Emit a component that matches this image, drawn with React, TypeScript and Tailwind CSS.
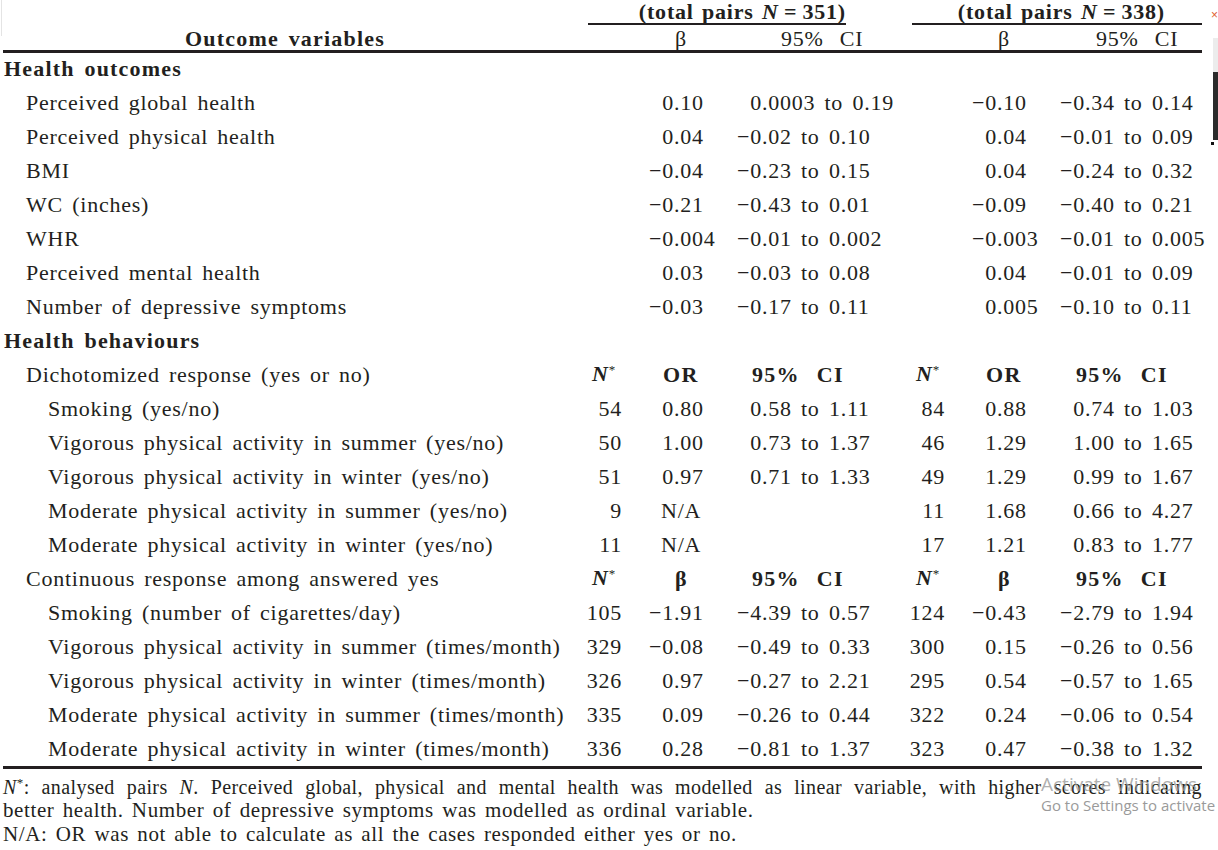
import React from 'react'

type Group = [string, string, string, string] // N, estimate, CI lower, CI upper

interface Row {
  kind: 'section' | 'data' | 'subhead'
  label: string
  level?: number
  head?: 'OR' | 'β'
  g1?: Group
  g2?: Group
}

const rows: Row[] = [
  { kind: 'section', label: 'Health outcomes' },
  { kind: 'data', level: 1, label: 'Perceived global health', g1: ['', '0.10', '0.0003', '0.19'], g2: ['', '−0.10', '−0.34', '0.14'] },
  { kind: 'data', level: 1, label: 'Perceived physical health', g1: ['', '0.04', '−0.02', '0.10'], g2: ['', '0.04', '−0.01', '0.09'] },
  { kind: 'data', level: 1, label: 'BMI', g1: ['', '−0.04', '−0.23', '0.15'], g2: ['', '0.04', '−0.24', '0.32'] },
  { kind: 'data', level: 1, label: 'WC (inches)', g1: ['', '−0.21', '−0.43', '0.01'], g2: ['', '−0.09', '−0.40', '0.21'] },
  { kind: 'data', level: 1, label: 'WHR', g1: ['', '−0.004', '−0.01', '0.002'], g2: ['', '−0.003', '−0.01', '0.005'] },
  { kind: 'data', level: 1, label: 'Perceived mental health', g1: ['', '0.03', '−0.03', '0.08'], g2: ['', '0.04', '−0.01', '0.09'] },
  { kind: 'data', level: 1, label: 'Number of depressive symptoms', g1: ['', '−0.03', '−0.17', '0.11'], g2: ['', '0.005', '−0.10', '0.11'] },
  { kind: 'section', label: 'Health behaviours' },
  { kind: 'subhead', level: 1, label: 'Dichotomized response (yes or no)', head: 'OR' },
  { kind: 'data', level: 2, label: 'Smoking (yes/no)', g1: ['54', '0.80', '0.58', '1.11'], g2: ['84', '0.88', '0.74', '1.03'] },
  { kind: 'data', level: 2, label: 'Vigorous physical activity in summer (yes/no)', g1: ['50', '1.00', '0.73', '1.37'], g2: ['46', '1.29', '1.00', '1.65'] },
  { kind: 'data', level: 2, label: 'Vigorous physical activity in winter (yes/no)', g1: ['51', '0.97', '0.71', '1.33'], g2: ['49', '1.29', '0.99', '1.67'] },
  { kind: 'data', level: 2, label: 'Moderate physical activity in summer (yes/no)', g1: ['9', 'N/A', '', ''], g2: ['11', '1.68', '0.66', '4.27'] },
  { kind: 'data', level: 2, label: 'Moderate physical activity in winter (yes/no)', g1: ['11', 'N/A', '', ''], g2: ['17', '1.21', '0.83', '1.77'] },
  { kind: 'subhead', level: 1, label: 'Continuous response among answered yes', head: 'β' },
  { kind: 'data', level: 2, label: 'Smoking (number of cigarettes/day)', g1: ['105', '−1.91', '−4.39', '0.57'], g2: ['124', '−0.43', '−2.79', '1.94'] },
  { kind: 'data', level: 2, label: 'Vigorous physical activity in summer (times/month)', g1: ['329', '−0.08', '−0.49', '0.33'], g2: ['300', '0.15', '−0.26', '0.56'] },
  { kind: 'data', level: 2, label: 'Vigorous physical activity in winter (times/month)', g1: ['326', '0.97', '−0.27', '2.21'], g2: ['295', '0.54', '−0.57', '1.65'] },
  { kind: 'data', level: 2, label: 'Moderate physical activity in summer (times/month)', g1: ['335', '0.09', '−0.26', '0.44'], g2: ['322', '0.24', '−0.06', '0.54'] },
  { kind: 'data', level: 2, label: 'Moderate physical activity in winter (times/month)', g1: ['336', '0.28', '−0.81', '1.37'], g2: ['323', '0.47', '−0.38', '1.32'] },
]

const cols = 'grid grid-cols-[582px_40px_95px_185px_43px_97px_157px]'

// splits a number on its decimal point so the column lines up on the point
function Dec({ v, w }: { v: string; w: string }) {
  const i = v.indexOf('.')
  const whole = i >= 0 ? v.slice(0, i) : v
  const frac = i >= 0 ? v.slice(i) : ''
  return (
    <>
      <span className={`inline-block text-right ${w}`}>{whole}</span>
      {frac}
    </>
  )
}

function NStar({ bold }: { bold?: boolean }) {
  return (
    <span className={bold ? 'font-bold' : ''}>
      <span className="italic">N</span>
      <span className="relative -top-[7px] text-[13px] font-normal">*</span>
    </span>
  )
}

function GroupCells({ g, second }: { g?: Group; second?: boolean }) {
  if (!g) return (<><div /><div /><div /></>)
  const [n, est, lo, hi] = g
  return (
    <>
      <div className="text-right pr-[3px]">{n}</div>
      <div className="whitespace-nowrap">
        {est === 'N/A' ? (
          <span className="pl-[36px]">N/A</span>
        ) : (
          <Dec v={est} w="w-[49px]" />
        )}
      </div>
      <div className="whitespace-nowrap">
        {lo && (
          <>
            <Dec v={lo} w={second ? 'w-[40px]' : 'w-[42px]'} /> to {hi}
          </>
        )}
      </div>
    </>
  )
}

function SubheadCells({ head }: { head: 'OR' | 'β' }) {
  const est = head === 'OR' ? 'pl-[38px] font-bold tracking-[1.5px]' : 'pl-[50px] font-bold'
  return (
    <>
      <div className="pl-[7px]"><NStar bold /></div>
      <div className={est}>{head}</div>
      <div className="pl-[32px] font-bold tracking-[1.3px] [word-spacing:10px]">95% CI</div>
      <div className="pl-[11px]"><NStar bold /></div>
      <div className={est}>{head}</div>
      <div className="pl-[31px] font-bold tracking-[1.3px] [word-spacing:10px]">95% CI</div>
    </>
  )
}

export default function App() {
  return (
    <div className="relative w-[1218px] h-[850px] overflow-hidden bg-white text-[#231f20] font-['Liberation_Serif',serif] text-[22px] leading-[24px] tracking-[0.75px] [word-spacing:3px]">
      <div className="ml-[3px] w-[1199px]">
        {/* group headers */}
        <div className="flex h-[25px]">
          <div className="w-[585px]" />
          <div className="w-[258px] h-[25px] border-b-2 border-[#231f20] text-right font-bold tracking-[0.8px] [word-spacing:2px] -mr-[2px]">
            (total pairs <span className="italic">N</span>{'\u2009=\u2009'}351)
          </div>
          <div className="w-[68px]" />
          <div className="w-[290px] h-[25px] border-b-2 border-[#231f20] text-right font-bold tracking-[0.8px] [word-spacing:2px] pr-[37px]">
            (total pairs <span className="italic">N</span>{'\u2009=\u2009'}338)
          </div>
        </div>

        {/* column headers */}
        <div className={`${cols} h-[28px] items-center pt-[2px] border-b-[3px] border-[#231f20]`}>
          <div className="text-center pr-[18px] font-bold tracking-[1.2px]">Outcome variables</div>
          <div />
          <div className="pl-[50px]">β</div>
          <div className="pl-[61px] [word-spacing:10px]">95% CI</div>
          <div />
          <div className="pl-[50px]">β</div>
          <div className="pl-[51px] [word-spacing:10px]">95% CI</div>
        </div>

        <div className="border-b-[3px] border-[#231f20] -mt-[1px]">
          {rows.map((r, idx) => (
            <div key={idx} className={`${cols} h-[34px] items-center`}>
              <div
                className={
                  r.kind === 'section'
                    ? 'pl-[1px] font-bold tracking-[1.2px] whitespace-nowrap'
                    : r.level === 2
                      ? 'pl-[45px] whitespace-nowrap'
                      : 'pl-[23px] whitespace-nowrap'
                }
              >
                {r.label}
              </div>
              {r.kind === 'subhead' && r.head ? (
                <SubheadCells head={r.head} />
              ) : r.kind === 'data' ? (
                <>
                  <GroupCells g={r.g1} />
                  <GroupCells g={r.g2} second />
                </>
              ) : null}
            </div>
          ))}
        </div>

        {/* footnotes */}
        <div className="mt-[8px]">
          <div className="text-[20px] leading-[21px] tracking-[0.4px] [word-spacing:1px] text-justify [text-align-last:justify]">
            <NStar />: analysed pairs <span className="italic">N</span>. Perceived global, physical and mental health was modelled as linear variable, with higher scores indicating
          </div>
          <div className="text-[21px] leading-[21px] tracking-[0.6px] [word-spacing:2.5px]">better health. Number of depressive symptoms was modelled as ordinal variable.</div>
          <div className="text-[21px] leading-[21px] tracking-[0.6px] [word-spacing:2.5px] mt-[3px]">N/A: OR was not able to calculate as all the cases responded either yes or no.</div>
        </div>
      </div>

      {/* screen overlays */}
      <div className="absolute left-[1px] top-0 h-[36px] w-[1px] bg-[#e4e4e4]" />
      <div className="absolute left-[1211px] top-[9px] text-[12px] leading-none text-[#e06030] font-['Liberation_Sans',sans-serif]">×</div>
      <div className="absolute left-[1213px] top-[38px] h-[34px] w-[5px] bg-[#ececec]" />
      <div className="absolute left-[1213px] top-[72px] h-[68px] w-[5px] bg-[#2b2b2b]" />
      <div className="absolute left-[1211px] top-[142px] h-[3px] w-[3px] bg-[#111]" />
      <div className="absolute left-[1041px] top-[775px] whitespace-nowrap font-['Open_Sans',sans-serif] text-[19px] leading-none text-[#9a9a9a]/80 tracking-normal [word-spacing:0px]">
        Activate Windows
      </div>
      <div className="absolute left-[1041px] top-[798px] whitespace-nowrap font-['Open_Sans',sans-serif] text-[15px] leading-none text-[#9a9a9a] tracking-normal [word-spacing:0px]">
        Go to Settings to activate Windows.
      </div>
    </div>
  )
}
